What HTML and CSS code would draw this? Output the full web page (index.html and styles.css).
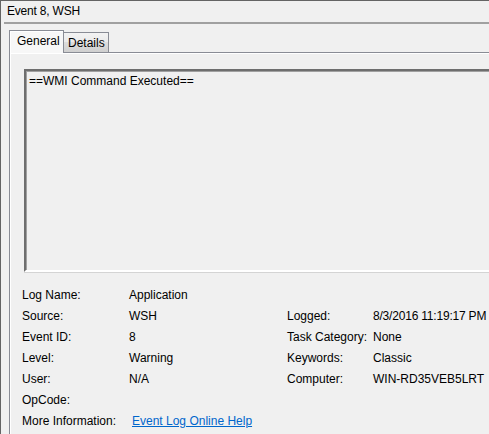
FILE: index.html
```html
<!DOCTYPE html>
<html>
<head>
<meta charset="utf-8">
<link rel="stylesheet" href="styles.css">
</head>
<body>
<div class="window">
  <div class="title">Event 8, WSH</div>
  <div class="sep"></div>
  <div class="content">
    <div class="tabs">
      <div class="tab active">General</div>
      <div class="tab">Details</div>
    </div>
    <div class="panel">
      <div class="textbox">==WMI Command Executed==</div>
      <div class="grid">
        <div class="lbl">Log Name:</div><div class="val">Application</div><div></div><div></div>
        <div class="lbl">Source:</div><div class="val">WSH</div><div class="lbl">Logged:</div><div class="val tight">8/3/2016 11:19:17 PM</div>
        <div class="lbl">Event ID:</div><div class="val">8</div><div class="lbl">Task Category:</div><div class="val">None</div>
        <div class="lbl">Level:</div><div class="val">Warning</div><div class="lbl">Keywords:</div><div class="val">Classic</div>
        <div class="lbl">User:</div><div class="val">N/A</div><div class="lbl">Computer:</div><div class="val">WIN-RD35VEB5LRT</div>
        <div class="lbl">OpCode:</div><div class="val"></div><div></div><div></div>
        <div class="lbl">More Information:</div><div class="val"><a class="link" href="#">Event Log Online Help</a></div><div></div><div></div>
      </div>
    </div>
  </div>
</div>
</body>
</html>
```
FILE: styles.css
```css
html, body {
  margin: 0;
  padding: 0;
  background: #f0f0f0;
}
body {
  width: 489px;
  height: 434px;
  overflow: hidden;
  font-family: "Liberation Sans", Arial, sans-serif;
  font-size: 12px;
  color: #000;
}
.window {
  height: 434px;
  box-sizing: border-box;
  border-top: 1px solid #646464;
  border-left: 1px solid #646464;
  background: #f0f0f0;
  overflow: hidden;
}
.title {
  height: 21px;
  line-height: 21px;
  padding-left: 6px;
  letter-spacing: -0.2px;
}
.sep {
  margin-left: 3px;
  height: 2px;
  background: #a0a0a0;
}
.content {
  padding: 6px 0 0 8px;
}
.tabs {
  display: flex;
  align-items: flex-end;
  height: 22px;
  position: relative;
  z-index: 1;
}
.tab {
  box-sizing: border-box;
  border: 1px solid #898c95;
  border-bottom: none;
  padding: 0 5px;
}
.tab.active {
  height: 23px;
  width: 55px;
  margin-bottom: -1px;
  line-height: 21px;
  padding-left: 7px;
  background: #f7f7f7;
  box-shadow: inset 1px 1px 0 #fff;
}
.tab:not(.active) {
  height: 20px;
  width: 45px;
  line-height: 21px;
  border-left: none;
  padding-left: 4px;
  background: linear-gradient(#f3f3f3, #ebebeb 45%, #dddddd 50%, #cfcfcf);
}
.panel {
  border-top: 1px solid #898c95;
  border-left: 1px solid #898c95;
  box-shadow: inset 1px 1px 0 #fff;
  padding: 16px 0 0 12px;
  height: 400px;
  margin-right: -60px;
}
.textbox {
  margin-left: 2px;
  margin-right: 0;
  border: 2px solid;
  border-color: #6e6e6e #fff #fff #6e6e6e;
  box-shadow: inset 1px 1px 0 #a0a0a0, 0 1px 0 #d4d4d4;
  padding: 3px 3px;
  line-height: 15px;
  box-sizing: border-box;
  height: 203px;
}
.grid {
  margin-top: 13px;
  display: grid;
  grid-template-columns: 107px 158px 86px auto;
  grid-auto-rows: 21px;
  line-height: 21px;
  white-space: nowrap;
}
.tight {
  letter-spacing: -0.2px;
}
.link {
  color: #0066cc;
  text-decoration: underline;
  margin-left: 3px;
}
```
